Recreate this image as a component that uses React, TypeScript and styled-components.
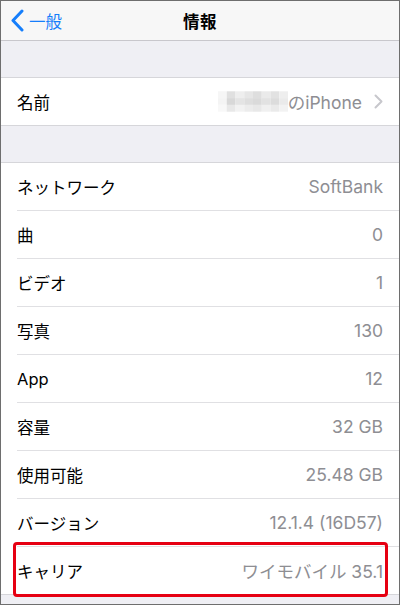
import styled, { createGlobalStyle } from 'styled-components';

const GlobalStyle = createGlobalStyle`
  html, body {
    margin: 0;
    padding: 0;
    background: #ffffff;
  }
  body {
    font-family: Inter, "Noto Sans CJK JP", sans-serif;
    -webkit-font-smoothing: antialiased;
  }
`;

const Frame = styled.div`
  width: 400px;
  height: 605px;
  box-sizing: border-box;
  border: 1px solid #6e6e6e;
  background: #efeff4;
  overflow: hidden;
`;

const NavBar = styled.div`
  height: 39px;
  background: #f7f7f7;
  border-bottom: 1px solid #c8c7cc;
  display: grid;
  grid-template-columns: 1fr auto 1fr;
  align-items: center;
`;

const BackButton = styled.div`
  display: flex;
  align-items: center;
  gap: 5px;
  padding-left: 9px;
  color: #157efb;
  font-size: 16.5px;
  font-family: "Noto Sans CJK JP", sans-serif;
`;

const NavTitle = styled.div`
  font-family: "Noto Sans CJK JP", sans-serif;
  font-weight: 700;
  font-size: 16.5px;
  color: #000;
  letter-spacing: 0.5px;
`;

const Spacer = styled.div`
  height: 36px;
  border-bottom: 1px solid #d6d6da;
`;

const Group = styled.div`
  background: #ffffff;
  border-bottom: 1px solid #d6d6da;
`;

const Row = styled.div<{ $highlight?: boolean }>`
  position: relative;
  padding-left: 16px;

  &:last-child > div {
    border-bottom: none;
  }

  ${(p) =>
    p.$highlight &&
    `
    &::after {
      content: '';
      position: absolute;
      left: 12px;
      right: 11px;
      top: -5px;
      bottom: -3px;
      border: 3px solid #e60012;
      border-radius: 4px;
      pointer-events: none;
    }
  `}
`;

const RowInner = styled.div`
  height: 47px;
  border-bottom: 1px solid #e0e0e3;
  padding-right: 16px;
  display: flex;
  align-items: center;
  justify-content: space-between;
`;

const Label = styled.span`
  font-family: Inter, "Noto Sans CJK JP", sans-serif;
  font-size: 16.5px;
  color: #000;
`;

const Value = styled.span`
  display: flex;
  align-items: center;
  gap: 12px;
  font-family: Inter, "Noto Sans CJK JP", sans-serif;
  font-size: 17.5px;
  color: #8e8e93;
`;

const NameValue = styled.span`
  display: flex;
  align-items: center;
`;

const rows: [string, string][] = [
  ['ネットワーク', 'SoftBank'],
  ['曲', '0'],
  ['ビデオ', '1'],
  ['写真', '130'],
  ['App', '12'],
  ['容量', '32 GB'],
  ['使用可能', '25.48 GB'],
  ['バージョン', '12.1.4 (16D57)'],
  ['キャリア', 'ワイモバイル 35.1'],
];

function Mosaic() {
  const cells = [
    ['#f6f6f6', '#e0e0e0', '#eeeeee', '#e6e6e6', '#dedede', '#eaeaea', '#e2e2e2', '#eeeeee'],
    ['#f4f4f4', '#d8d8d8', '#e4e4e4', '#dedede', '#dadada', '#e2e2e2', '#dcdcdc', '#eaeaea'],
    ['#f8f8f8', '#e8e8e8', '#f2f2f2', '#ececec', '#e8e8e8', '#f0f0f0', '#eaeaea', '#f2f2f2'],
  ];
  return (
    <svg width="70" height="21" viewBox="0 0 72 21">
      {cells.map((row, r) =>
        row.map((c, i) => <rect key={`${r}-${i}`} x={i * 9} y={r * 7} width="9" height="7" fill={c} />)
      )}
    </svg>
  );
}

export default function App() {
  return (
    <>
      <GlobalStyle />
      <Frame>
        <NavBar>
          <BackButton>
            <svg width="14" height="23" viewBox="0 0 14 23">
              <path d="M12 2 L3 11.5 L12 21" fill="none" stroke="#157efb" strokeWidth="3" strokeLinecap="round" strokeLinejoin="round" />
            </svg>
            一般
          </BackButton>
          <NavTitle>情報</NavTitle>
          <div />
        </NavBar>
        <Spacer />
        <Group>
          <Row>
            <RowInner>
              <Label>名前</Label>
              <Value>
                <NameValue>
                  <Mosaic />
                  のiPhone
                </NameValue>
                <svg width="9" height="15" viewBox="0 0 9 15">
                  <path d="M1.5 1.5 L7.5 7.5 L1.5 13.5" fill="none" stroke="#c7c7cc" strokeWidth="2" strokeLinecap="round" strokeLinejoin="round" />
                </svg>
              </Value>
            </RowInner>
          </Row>
        </Group>
        <Spacer />
        <Group>
          {rows.map(([label, value], i) => (
            <Row key={label} $highlight={i === rows.length - 1}>
              <RowInner>
                <Label>{label}</Label>
                <Value>{value}</Value>
              </RowInner>
            </Row>
          ))}
        </Group>
      </Frame>
    </>
  );
}
